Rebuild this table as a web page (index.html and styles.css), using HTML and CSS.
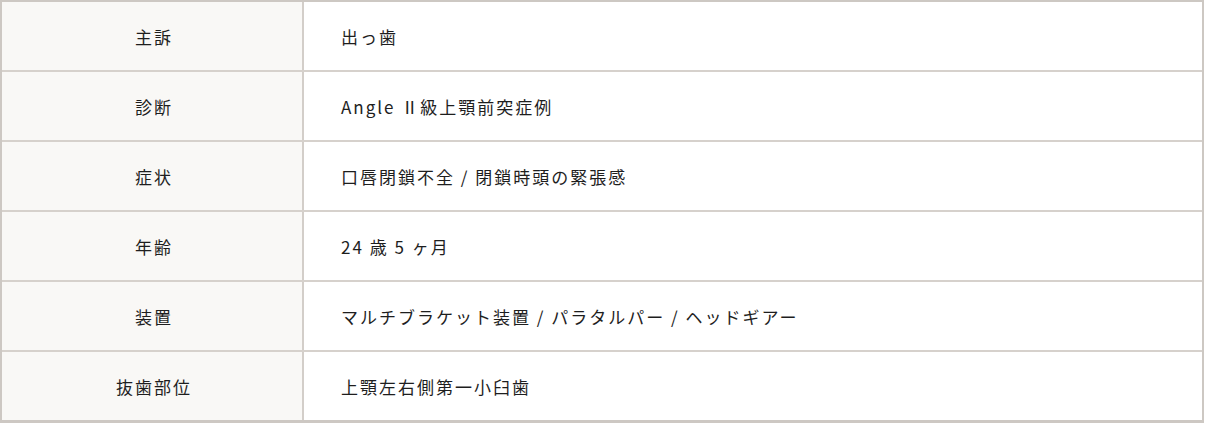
FILE: index.html
```html
<!DOCTYPE html>
<html lang="ja">
<head>
<meta charset="utf-8">
<title>症例</title>
<link rel="stylesheet" href="styles.css">
</head>
<body>
<div class="case">
  <div class="row"><div class="label">主訴</div><div class="value">出っ歯</div></div>
  <div class="row"><div class="label">診断</div><div class="value">Angle Ⅱ級上顎前突症例</div></div>
  <div class="row"><div class="label">症状</div><div class="value">口唇閉鎖不全 / 閉鎖時頭の緊張感</div></div>
  <div class="row"><div class="label">年齢</div><div class="value">24 歳 5 ヶ月</div></div>
  <div class="row"><div class="label">装置</div><div class="value">マルチブラケット装置 / パラタルパー / ヘッドギアー</div></div>
  <div class="row"><div class="label">抜歯部位</div><div class="value">上顎左右側第一小臼歯</div></div>
</div>
</body>
</html>
```
FILE: styles.css
```css
* { box-sizing: border-box; }
html, body { margin: 0; padding: 0; background: #ffffff; }
body {
  font-family: "Noto Sans CJK JP", "Noto Sans", sans-serif;
  font-size: 17px;
  color: #1e1e1e;
  letter-spacing: 2px;
}
.case {
  width: 1204px;
  border: 2px solid #cdc8c3;
  border-bottom-width: 3px;
}
.row {
  display: grid;
  grid-template-columns: 302px 1fr;
  height: 70px;
  border-bottom: 2px solid #d6d1cc;
}
.row:last-child { border-bottom: none; height: 68px; }
.label {
  background: #f9f8f6;
  border-right: 2px solid #d3cec9;
  display: flex;
  align-items: center;
  justify-content: center;
  padding-left: 4px;
}
.value {
  display: flex;
  align-items: center;
  padding-left: 37px;
}
```
